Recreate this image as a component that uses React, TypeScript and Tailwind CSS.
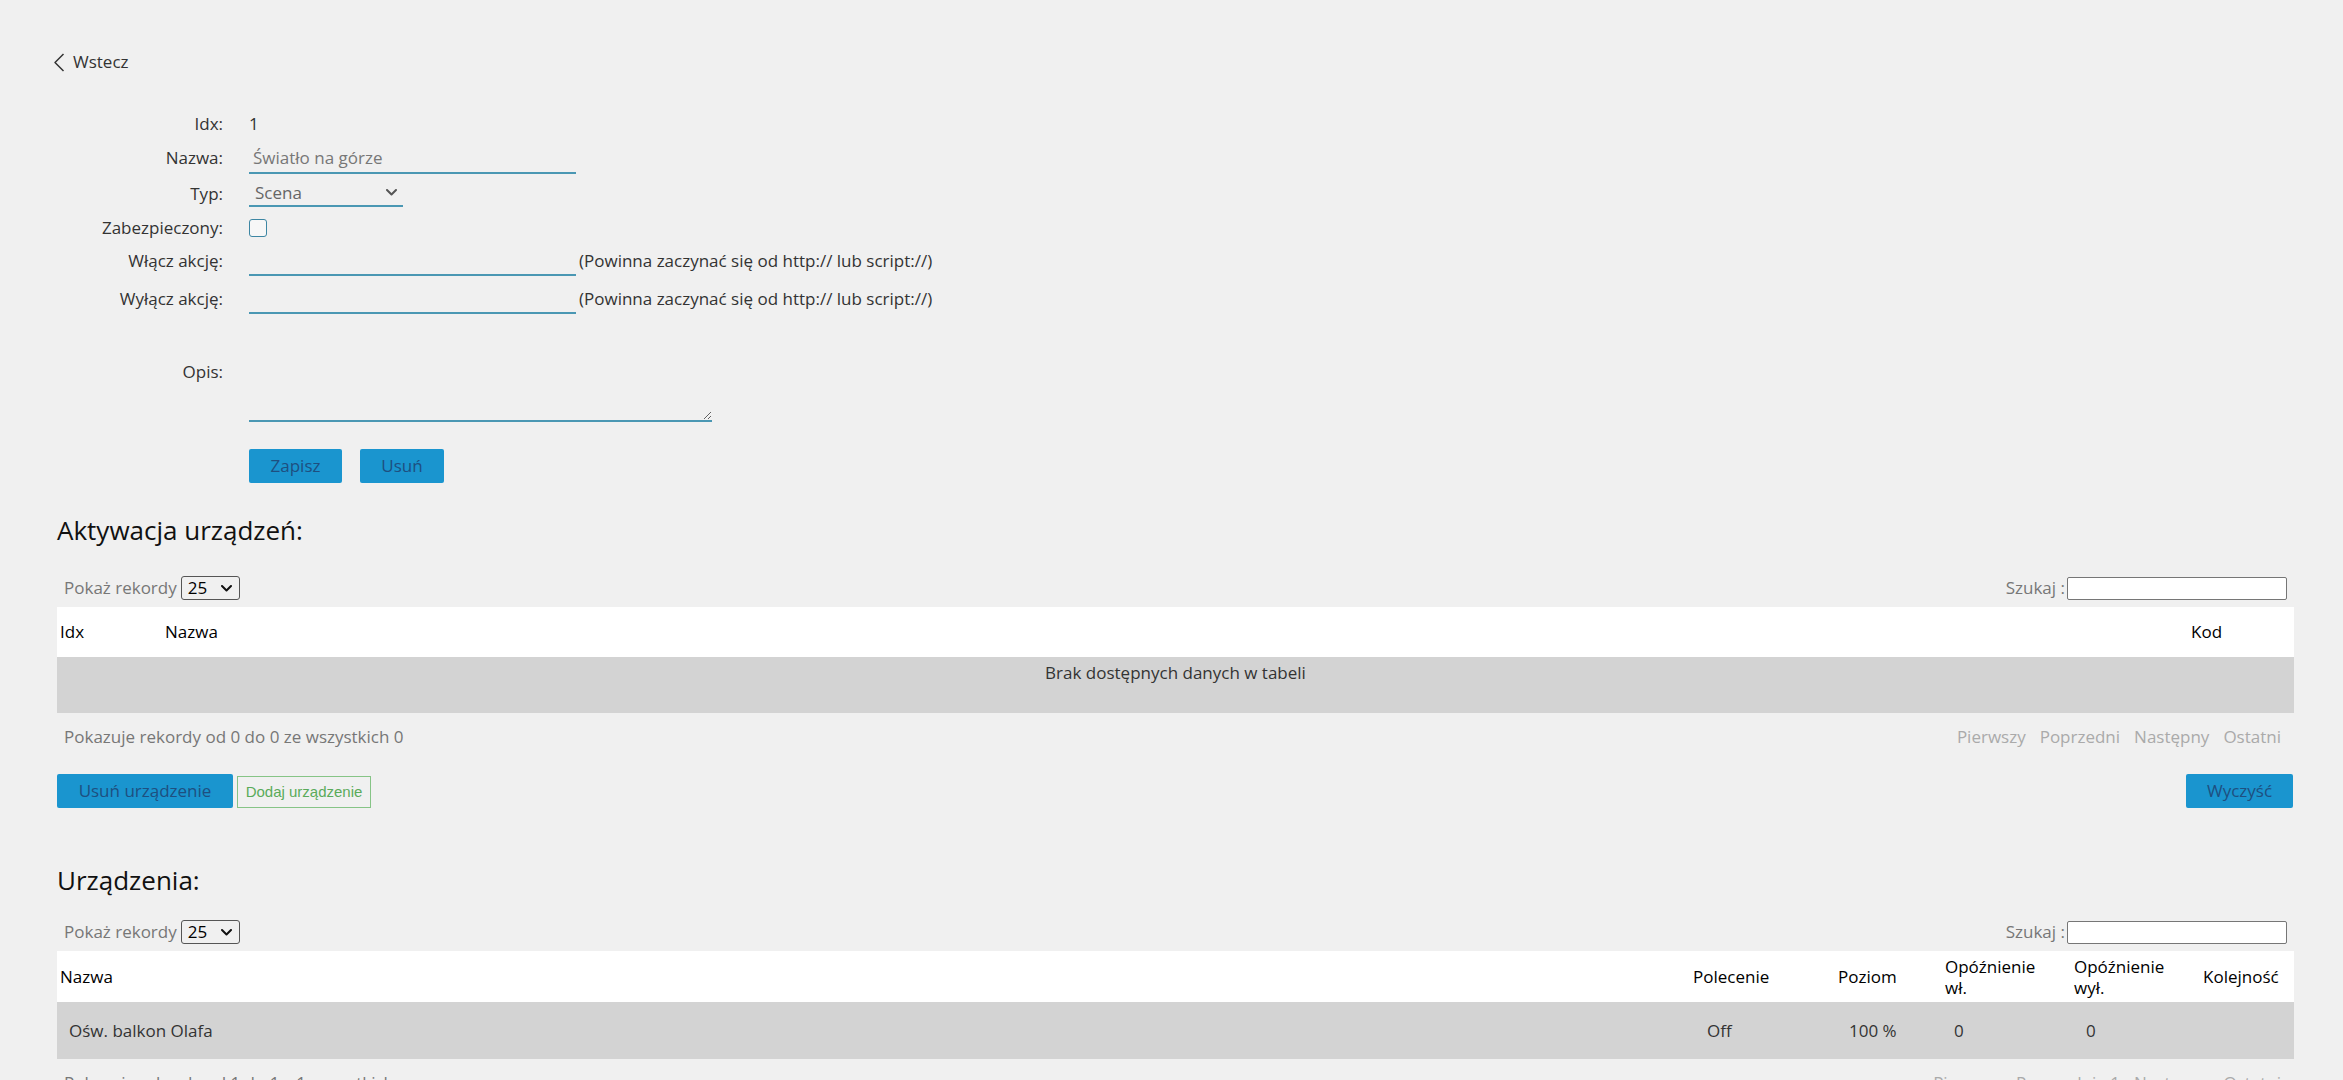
import type { ReactNode } from 'react'

const FONT = "font-['Open_Sans','Noto_Sans',sans-serif]"

function ChevronDown({ className }: { className?: string }) {
  return (
    <svg width="11" height="7" viewBox="0 0 11 7" className={className} fill="none">
      <path d="M1 1l4.5 4.5L10 1" stroke="currentColor" strokeWidth="2" strokeLinecap="round" strokeLinejoin="round" />
    </svg>
  )
}

function FormRow({
  label,
  children,
  className,
  top = false,
}: {
  label: string
  children: ReactNode
  className: string
  top?: boolean
}) {
  return (
    <div className={`flex ${top ? 'items-start' : 'items-center'} ${className}`}>
      <div className="w-[166px] shrink-0 text-right text-[#333]">{label}</div>
      <div className="ml-[26px] flex items-center">{children}</div>
    </div>
  )
}

function BlueButton({ children, className }: { children: ReactNode; className: string }) {
  return (
    <button
      type="button"
      className={`flex h-[34px] items-center justify-center rounded-[2px] bg-[#1a95cf] text-[#1e4f80] ${className}`}
    >
      {children}
    </button>
  )
}

function LengthPicker() {
  return (
    <div className="flex h-[24px] items-center">
      <span className="pl-[7px] text-[#777]">Pokaż rekordy</span>
      <div className="ml-[4px] flex h-[24px] w-[59px] items-center justify-between rounded-[3px] border border-[#555] pl-[6px] pr-[7px] text-black">
        <span>25</span>
        <ChevronDown className="text-[#111]" />
      </div>
    </div>
  )
}

function SearchBox() {
  return (
    <div className="flex items-center pr-[7px]">
      <span className="text-[#777]">Szukaj :</span>
      <input
        type="text"
        className="ml-[2px] h-[23px] w-[220px] rounded-[2px] border border-[#767676] bg-white px-[4px] text-[15px] outline-none"
      />
    </div>
  )
}

function Pager({ items }: { items: string[] }) {
  return (
    <div className="flex gap-[14px] pr-[13px] text-[#aaa]">
      {items.map((it, i) => (
        <span key={i}>{it}</span>
      ))}
    </div>
  )
}

export default function App() {
  return (
    <div className={`min-h-screen w-full bg-[#f0f0f0] text-[17px] leading-[24px] text-[#333] ${FONT}`}>
      <div className="pl-[57px] pr-[49px] pt-[50px] pb-[40px]">
        {/* back link */}
        <div className="-ml-[4px] flex h-[24px] items-center gap-[8px]">
          <svg width="12" height="19" viewBox="0 0 12 19" fill="none">
            <path d="M10.5 1L2 9.5l8.5 8.5" stroke="#333" strokeWidth="1.5" strokeLinejoin="round" />
          </svg>
          <span>Wstecz</span>
        </div>

        {/* scene form */}
        <div className="mt-[36px] flex flex-col">
          <FormRow label="Idx:" className="h-[28px]">
            <span>1</span>
          </FormRow>
          <FormRow label="Nazwa:" className="mt-[4px] h-[32px]">
            <input
              type="text"
              defaultValue="Światło na górze"
              className="h-[32px] w-[327px] border-b-2 border-[#4a97b3] pl-[4px] text-[#777] outline-none"
            />
          </FormRow>
          <FormRow label="Typ:" className="mt-[6px] h-[27px]">
            <div className="flex h-[27px] w-[154px] items-center justify-between border-b-2 border-[#4a97b3] pl-[6px] pr-[6px] text-[#666]">
              <span>Scena</span>
              <ChevronDown className="text-[#555]" />
            </div>
          </FormRow>
          <FormRow label="Zabezpieczony:" className="mt-[7px] h-[28px]">
            <div className="h-[18px] w-[18px] rounded-[3px] border-[1.5px] border-[#3d86a3] bg-[#f7f7f7]" />
          </FormRow>
          <FormRow label="Włącz akcję:" className="mt-[4px] h-[30px]">
            <input type="text" className="h-[30px] w-[327px] border-b-2 border-[#4a97b3] outline-none" />
            <span className="ml-[3px]">(Powinna zaczynać się od http:// lub script://)</span>
          </FormRow>
          <FormRow label="Wyłącz akcję:" className="mt-[8px] h-[30px]">
            <input type="text" className="h-[30px] w-[327px] border-b-2 border-[#4a97b3] outline-none" />
            <span className="ml-[3px]">(Powinna zaczynać się od http:// lub script://)</span>
          </FormRow>
          <FormRow label="Opis:" className="mt-[46px] h-[62px]" top>
            <textarea className="h-[62px] w-[463px] border-b-2 border-[#4a97b3] outline-none" />
          </FormRow>
          <div className="mt-[27px] flex gap-[18px] pl-[192px]">
            <BlueButton className="w-[93px]">Zapisz</BlueButton>
            <BlueButton className="w-[84px]">Usuń</BlueButton>
          </div>
        </div>

        {/* device activation */}
        <h2 className="mt-[29px] text-[26px] leading-[36px] font-medium text-[#111]">Aktywacja urządzeń:</h2>
        <div className="mt-[28px] flex items-center justify-between">
          <LengthPicker />
          <SearchBox />
        </div>
        <div className="mt-[7px] grid h-[50px] grid-cols-[105px_1fr_106px] items-center bg-white text-black">
          <div className="pl-[3px]">Idx</div>
          <div className="pl-[3px]">Nazwa</div>
          <div className="pl-[3px]">Kod</div>
        </div>
        <div className="h-[56px] bg-[#d3d3d3] pt-[4px] text-center">Brak dostępnych danych w tabeli</div>
        <div className="mt-[12px] flex h-[24px] items-center justify-between">
          <span className="pl-[7px] text-[#777]">Pokazuje rekordy od 0 do 0 ze wszystkich 0</span>
          <Pager items={['Pierwszy', 'Poprzedni', 'Następny', 'Ostatni']} />
        </div>
        <div className="mt-[25px] flex h-[34px] justify-between">
          <div className="flex gap-[4px]">
            <BlueButton className="w-[176px]">Usuń urządzenie</BlueButton>
            <button
              type="button"
              className="mt-[2px] flex h-[32px] w-[134px] items-center justify-center border border-[#86c486] font-['Liberation_Sans',Arial,sans-serif] text-[15px] text-[#5aab5a]"
            >
              Dodaj urządzenie
            </button>
          </div>
          <BlueButton className="mr-[1px] w-[107px]">Wyczyść</BlueButton>
        </div>

        {/* devices */}
        <h2 className="mt-[54px] text-[26px] leading-[36px] font-medium text-[#111]">Urządzenia:</h2>
        <div className="mt-[22px] flex items-center justify-between">
          <LengthPicker />
          <SearchBox />
        </div>
        <div className="mt-[7px] grid h-[51px] grid-cols-[1fr_145px_107px_129px_129px_94px] items-center bg-white leading-[21px] text-black">
          <div className="pl-[3px]">Nazwa</div>
          <div className="pl-[3px]">Polecenie</div>
          <div className="pl-[3px]">Poziom</div>
          <div className="pl-[3px]">
            Opóźnienie
            <br />
            wł.
          </div>
          <div className="pl-[3px]">
            Opóźnienie
            <br />
            wył.
          </div>
          <div className="pl-[3px]">Kolejność</div>
        </div>
        <div className="grid h-[57px] grid-cols-[1fr_145px_107px_129px_129px_94px] items-center bg-[#d3d3d3]">
          <div className="pl-[12px]">Ośw. balkon Olafa</div>
          <div className="pl-[17px]">Off</div>
          <div className="pl-[14px]">100 %</div>
          <div className="pl-[12px]">0</div>
          <div className="pl-[15px]">0</div>
          <div />
        </div>
        <div className="mt-[12px] flex h-[24px] items-center justify-between">
          <span className="pl-[7px] text-[#777]">Pokazuje rekordy od 1 do 1 z 1 wszystkich</span>
          <Pager items={['Pierwszy', 'Poprzedni', '1', 'Następny', 'Ostatni']} />
        </div>
      </div>
    </div>
  )
}
